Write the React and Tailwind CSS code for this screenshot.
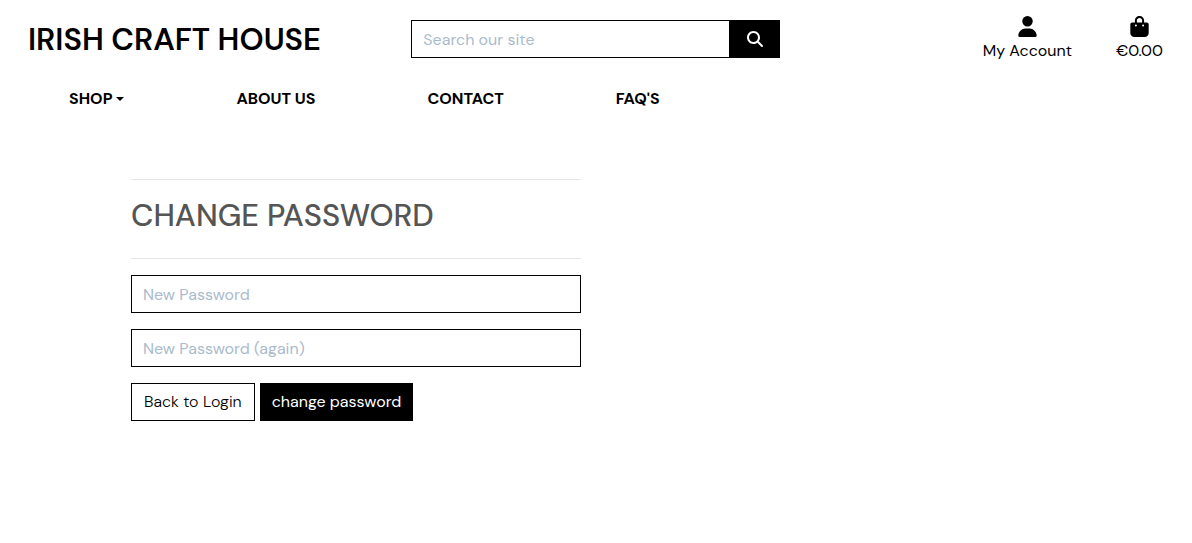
import { FaUser, FaBagShopping, FaMagnifyingGlass } from "react-icons/fa6";

const field =
  "block h-[38px] w-full border border-black bg-white px-[11px] text-base text-black outline-none placeholder:text-[#aabbcb]";

function NavLink({ children, caret }) {
  return (
    <a href="#" className="flex items-center px-14 py-2 text-base leading-6 font-bold text-black">
      {children}
      {caret && (
        <span className="ml-1 border-x-4 border-t-4 border-x-transparent border-t-black" />
      )}
    </a>
  );
}

export default function App() {
  return (
    <div className="min-h-screen bg-white font-['DM_Sans','Open_Sans',sans-serif] text-base text-black">
      <header>
        <div className="grid grid-cols-3 px-3">
          <a href="#" className="px-4 pt-5 text-[31px] leading-10 font-semibold whitespace-nowrap">
            IRISH CRAFT HOUSE
          </a>
          <form className="flex pt-5 pr-[11px] pl-[10px]" onSubmit={(e) => e.preventDefault()}>
            <input aria-label="Search our site" placeholder="Search our site" className={field} />
            <button aria-label="Search" className="flex h-[38px] w-[50px] shrink-0 items-center justify-center bg-black text-white">
              <FaMagnifyingGlass size={16} />
            </button>
          </form>
          <div className="flex justify-end gap-11 pt-4 pr-[17px]">
            <a href="#" className="flex flex-col items-center gap-[2px] leading-6">
              <FaUser size={21} />
              My Account
            </a>
            <a href="#" className="flex flex-col items-center gap-[2px] leading-6">
              <FaBagShopping size={21} />
              €0.00
            </a>
          </div>
        </div>
        <nav className="flex px-[13px] pt-4">
          <NavLink caret>SHOP</NavLink>
          <NavLink>ABOUT US</NavLink>
          <NavLink>CONTACT</NavLink>
          <NavLink>FAQ'S</NavLink>
        </nav>
      </header>
      <main className="px-[131px] pt-[60px]">
        <div className="w-[450px] max-w-full">
          <hr className="border-[#e5e5e5]" />
          <h1 className="pt-4 pb-[22px] text-[31px] leading-10 font-medium text-[#555]">CHANGE PASSWORD</h1>
          <hr className="mb-4 border-[#e5e5e5]" />
          <form className="flex flex-col gap-4" onSubmit={(e) => e.preventDefault()}>
            <input type="password" aria-label="New Password" placeholder="New Password" className={field} />
            <input type="password" aria-label="New Password (again)" placeholder="New Password (again)" className={field} />
            <div className="flex gap-[5px]">
              <a href="#" className="flex h-[38px] items-center border border-black px-3 font-light">Back to Login</a>
              <button className="h-[38px] bg-black px-3 text-white">change password</button>
            </div>
          </form>
        </div>
      </main>
    </div>
  );
}
